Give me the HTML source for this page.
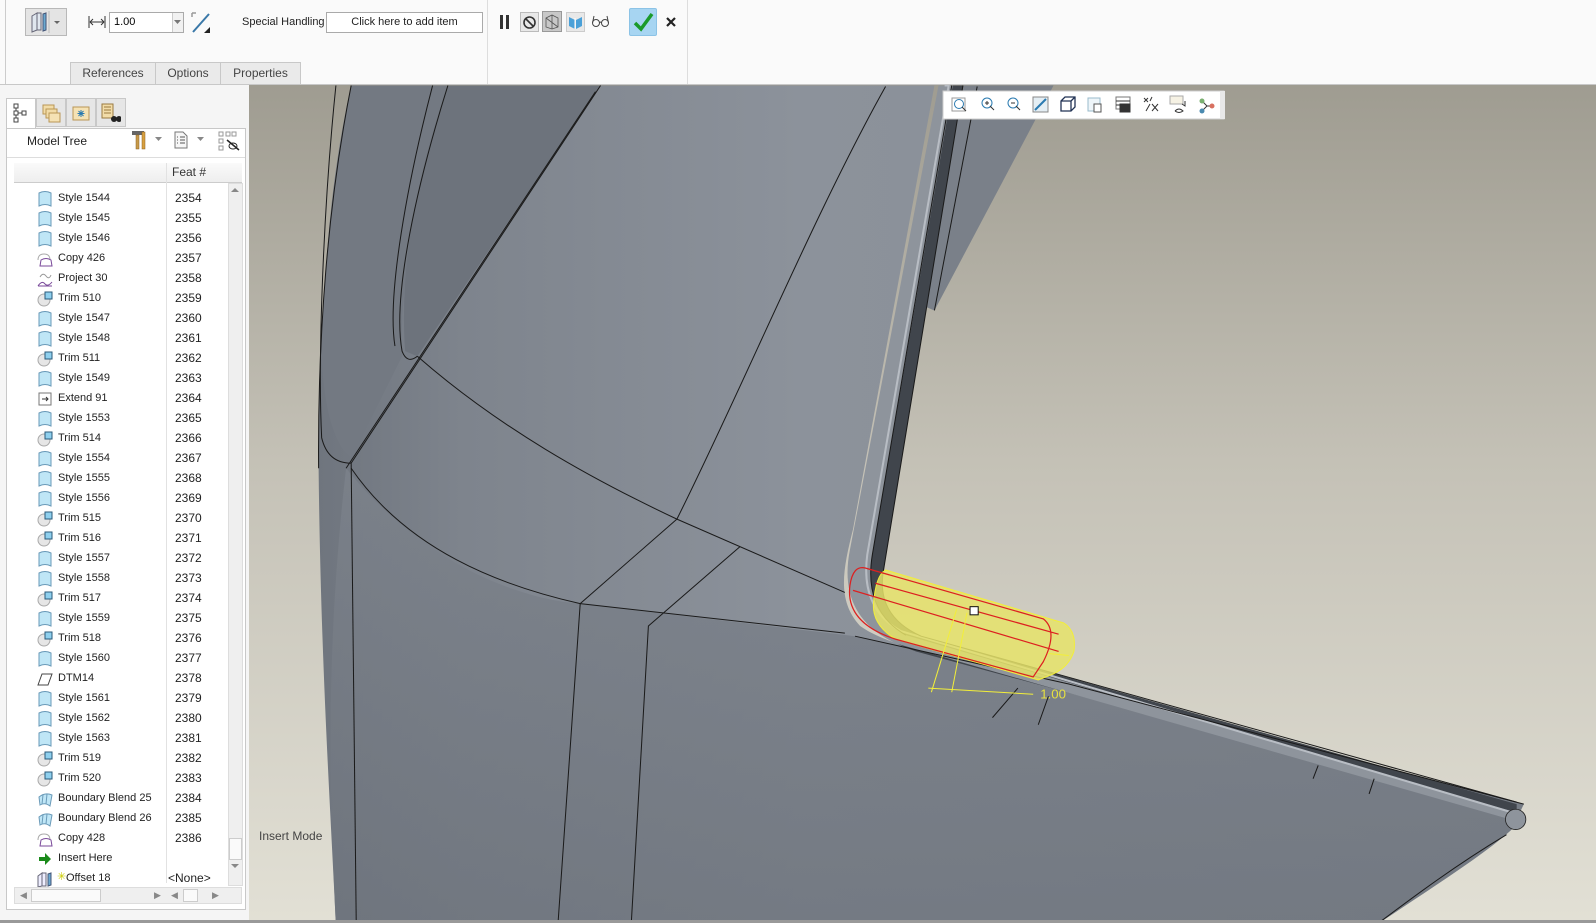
<!DOCTYPE html>
<html><head><meta charset="utf-8">
<style>
*{margin:0;padding:0;box-sizing:border-box}
body{width:1596px;height:923px;overflow:hidden;background:#f3f3f3;font-family:"Liberation Sans",sans-serif;position:relative}
.a{position:absolute}
#top{left:0;top:0;width:1596px;height:85px;background:#fafafa;border-bottom:1px solid #c8c8c8}
.t11{font-size:11px;color:#222}
.tab{position:absolute;top:62px;height:22px;border:1px solid #c8c8c8;border-bottom:none;background:#eaeaea;font-size:12px;color:#444;text-align:center;line-height:21px}
.row{position:absolute;left:0;width:230px;height:20px;font-size:11px;color:#222}
.row .ic{position:absolute;left:37px;top:2px;width:16px;height:16px}
.row .nm{position:absolute;left:58px;top:3px}
.row .fn{position:absolute;left:175px;top:2px;font-size:12px}
</style></head><body>
<div id="top" class="a">
  <div class="a" style="left:5px;top:0;width:1px;height:84px;background:#ccc"></div>
  <!-- offset button -->
  <div class="a" style="left:25px;top:8px;width:42px;height:28px;background:#e4e4e4;border:1px solid #b8b8b8"></div>
  <svg class="a" style="left:29px;top:11px" width="36" height="22"><path d="M3 5 L8 2 L8 19 L3 21 Z M8 2 L12 2 L12 19 L8 19" fill="#dfe6ee" stroke="#667" stroke-width="1"/><path d="M14 3 L17 2 L17 19 L14 20 Z" fill="#6aa9d0" stroke="#457"/><line x1="20" y1="0" x2="20" y2="22" stroke="#bbb"/><path d="M25 10 L31 10 L28 13 Z" fill="#666"/></svg>
  <svg class="a" style="left:88px;top:15px" width="18" height="14"><path d="M1 1 V13 M17 1 V13 M2 7 H16 M2 7 L5 4 M2 7 L5 10 M16 7 L13 4 M16 7 L13 10" stroke="#333" fill="none"/></svg>
  <div class="a" style="left:109px;top:12px;width:75px;height:21px;background:#fff;border:1px solid #aaa;font-size:11px;padding:3px 0 0 4px">1.00</div>
  <div class="a" style="left:172px;top:13px;width:11px;height:19px;background:#f1f1f1;border-left:1px solid #ccc"></div>
  <svg class="a" style="left:173px;top:19px" width="9" height="6"><path d="M1 1 L8 1 L4.5 5 Z" fill="#777"/></svg>
  <svg class="a" style="left:190px;top:11px" width="22" height="24"><path d="M3 21 L19 3" stroke="#3a78a8" stroke-width="2"/><path d="M2 2 L6 2 M2 2 L2 6" stroke="#999" stroke-width="1.5"/><path d="M20 22 L14 22 L20 16 Z" fill="#222"/></svg>
  <div class="a t11" style="left:242px;top:16px">Special Handling</div>
  <div class="a" style="left:326px;top:12px;width:157px;height:21px;background:#fff;border:1px solid #aaa;font-size:11px;color:#222;text-align:center;line-height:19px">Click here to add item</div>
  <div class="a" style="left:487px;top:0;width:1px;height:84px;background:#ddd"></div>
  <div class="a" style="left:500px;top:15px;width:3px;height:14px;background:#333"></div>
  <div class="a" style="left:506px;top:15px;width:3px;height:14px;background:#333"></div>
  <div class="a" style="left:520px;top:12px;width:19px;height:20px;background:#e8e8e8;border:1px solid #bbb"></div>
  <svg class="a" style="left:522px;top:15px" width="15" height="15"><circle cx="7.5" cy="7.5" r="5.5" stroke="#333" stroke-width="1.6" fill="none"/><path d="M4 4 L11 11" stroke="#333" stroke-width="1.6"/></svg>
  <div class="a" style="left:542px;top:11px;width:20px;height:21px;background:#c8c8c8;border:1px solid #999"></div>
  <svg class="a" style="left:544px;top:13px" width="16" height="17"><path d="M2 5 L8 2 L14 5 L14 14 L8 16 L2 14 Z M8 2 V16 M2 5 L14 14" stroke="#555" fill="none" stroke-width="0.8"/></svg>
  <div class="a" style="left:566px;top:12px;width:19px;height:20px;background:#e8e8e8;border:1px solid #ccc"></div>
  <svg class="a" style="left:567px;top:14px" width="17" height="16"><path d="M2 3 L8 6 L8 15 L2 12 Z" fill="#4aa0d8"/><path d="M9 6 L15 3 L15 12 L9 15 Z" fill="#4aa0d8"/><path d="M8 4 L8 15" stroke="#fff"/></svg>
  <svg class="a" style="left:591px;top:14px" width="20" height="14"><circle cx="5" cy="9" r="3.5" stroke="#444" fill="none"/><circle cx="14" cy="9" r="3.5" stroke="#444" fill="none"/><path d="M8.5 9 Q9.5 7 10.5 9 M1.5 9 L3 2 M17.5 9 L16 2" stroke="#444" fill="none"/></svg>
  <div class="a" style="left:629px;top:8px;width:28px;height:28px;background:#a7d5f2;border:1px solid #8cc3e6;border-radius:2px"></div>
  <svg class="a" style="left:632px;top:11px" width="22" height="22"><path d="M3 12 L9 18 L20 3" stroke="#1a9a2a" stroke-width="3.5" fill="none"/></svg>
  <svg class="a" style="left:665px;top:16px" width="12" height="12"><path d="M2 2 L10 10 M10 2 L2 10" stroke="#222" stroke-width="2.2"/></svg>
  <div class="a" style="left:687px;top:0;width:1px;height:84px;background:#ddd"></div>
  <div class="tab" style="left:70px;width:86px">References</div>
  <div class="tab" style="left:155px;width:66px">Options</div>
  <div class="tab" style="left:220px;width:81px">Properties</div>
</div>

<!-- left panel -->
<div class="a" style="left:0;top:85px;width:249px;height:838px;background:#f5f5f5"></div>
<div class="a" style="left:6px;top:98px;width:30px;height:31px;background:#fff;border:1px solid #c8c8c8;border-bottom:none"></div>
<div class="a" style="left:36px;top:98px;width:30px;height:29px;background:#e6e6e6;border:1px solid #c8c8c8"></div>
<div class="a" style="left:66px;top:98px;width:30px;height:29px;background:#e6e6e6;border:1px solid #c8c8c8"></div>
<div class="a" style="left:96px;top:98px;width:30px;height:29px;background:#e6e6e6;border:1px solid #c8c8c8"></div>
<svg class="a" style="left:13px;top:103px" width="16" height="20"><path d="M1 1h4v4h-4z M1 8h4v4h-4z M1 15h4v4h-4z M9 8h4v4h-4z M3 5v3 M5 10h4 M3 12v3" stroke="#444" fill="#fff" stroke-width="1"/></svg>
<svg class="a" style="left:42px;top:103px" width="20" height="20"><rect x="1" y="2" width="11" height="9" fill="#f2dca8" stroke="#b99756"/><rect x="4" y="6" width="11" height="9" fill="#f2dca8" stroke="#b99756"/><rect x="7" y="10" width="11" height="9" fill="#f5e2b4" stroke="#b99756"/></svg>
<svg class="a" style="left:72px;top:104px" width="18" height="17"><rect x="1" y="3" width="16" height="13" fill="#f5e2b4" stroke="#b99756"/><path d="M9 6v7 M5.5 9.5h7 M6.5 7l5 5 M11.5 7l-5 5" stroke="#2a7ab0"/></svg>
<svg class="a" style="left:101px;top:103px" width="20" height="20"><rect x="1" y="1" width="11" height="14" fill="#f2dca8" stroke="#9a7a40"/><path d="M3 4h7 M3 7h7 M3 10h7" stroke="#9a7a40"/><circle cx="13" cy="16" r="3" fill="#222"/><circle cx="18" cy="16" r="3" fill="#222"/></svg>
<div class="a" style="left:6px;top:128px;width:240px;height:782px;background:#fff;border:1px solid #c8c8c8"></div>
<div class="a" style="left:27px;top:134px;font-size:12px;color:#222">Model Tree</div>
<svg class="a" style="left:131px;top:129px" width="18" height="22"><rect x="1" y="2" width="12" height="4" fill="#666"/><rect x="5" y="6" width="3" height="14" fill="#c89a4a" stroke="#8a6020" stroke-width=".5"/><rect x="11" y="3" width="3" height="17" fill="#d8a040" stroke="#8a6020" stroke-width=".5"/></svg>
<svg class="a" style="left:154px;top:136px" width="9" height="6"><path d="M1 1 L8 1 L4.5 5 Z" fill="#888"/></svg>
<svg class="a" style="left:174px;top:131px" width="14" height="18"><path d="M1 1h8l4 4v12h-12z" fill="#f6f6f6" stroke="#777"/><path d="M3 6h1 M3 9h1 M3 12h1 M6 6h5 M6 9h5 M6 12h5" stroke="#555"/></svg>
<svg class="a" style="left:196px;top:136px" width="9" height="6"><path d="M1 1 L8 1 L4.5 5 Z" fill="#888"/></svg>
<svg class="a" style="left:218px;top:131px" width="22" height="20"><path d="M1 1h4v4h-4z M1 8h4v4h-4z M1 15h4v4h-4z M8 1h4v4h-4z M14 1h4v4h-4z" stroke="#999" fill="#fff"/><ellipse cx="15" cy="15" rx="4" ry="3" fill="#fff" stroke="#222"/><path d="M9 9 L21 19" stroke="#222" stroke-width="1.5"/></svg>
<div class="a" style="left:7px;top:157px;width:238px;height:1px;background:#ddd"></div>
<div class="a" style="left:14px;top:163px;width:228px;height:20px;background:linear-gradient(#fafafa,#eee);border-bottom:1px solid #ccc"></div>
<div class="a" style="left:166px;top:163px;width:1px;height:720px;background:#e2e2e2"></div>
<div class="a" style="left:172px;top:165px;font-size:12px;color:#333">Feat #</div>
<div class="a" style="left:228px;top:183px;width:15px;height:703px;background:#efefef;border:1px solid #ddd"></div>
<svg class="a" style="left:230px;top:186px" width="10" height="8"><path d="M1 6 L9 6 L5 2 Z" fill="#888"/></svg>
<div class="a" style="left:229px;top:838px;width:13px;height:22px;background:#fafafa;border:1px solid #ccc"></div>
<svg class="a" style="left:230px;top:862px" width="10" height="8"><path d="M1 2 L9 2 L5 6 Z" fill="#888"/></svg>
<div class="a" style="left:14px;top:887px;width:228px;height:17px;background:#efefef;border:1px solid #ddd"></div>
<div class="a" style="left:31px;top:889px;width:70px;height:13px;background:#fafafa;border:1px solid #ccc"></div>
<div class="a" style="left:183px;top:889px;width:15px;height:13px;background:#fafafa;border:1px solid #ccc"></div>
<div class="a" style="left:20px;top:890px;font-size:9px;color:#888">◀</div>
<div class="a" style="left:154px;top:890px;font-size:9px;color:#888">▶</div>
<div class="a" style="left:171px;top:890px;font-size:9px;color:#888">◀</div>
<div class="a" style="left:212px;top:890px;font-size:9px;color:#888">▶</div>

<div id="tree" class="a" style="left:0;top:0">
<svg width="0" height="0" style="position:absolute"><defs>
<g id="sty"><path d="M2 2 Q8 -1 14 2 L14 15 Q8 12 2 15 Z" fill="#bfe6f6" stroke="#6a9ab8"/></g>
<g id="trm"><circle cx="7" cy="9" r="6" fill="#e6e6e6" stroke="#aaa"/><rect x="8" y="1" width="7" height="7" fill="#8fd0ee" stroke="#2a5a7a"/></g>
<g id="cpy"><path d="M1 9 Q1 3 7 3 Q13 3 13 9" fill="none" stroke="#aaa"/><path d="M3 15 L4 9 Q9 6 14 9 L15 15 Z" fill="#fff" stroke="#7a4a9a"/></g>
<g id="prj"><path d="M3 6 Q6 1 9 5 Q12 9 14 4" fill="none" stroke="#999"/><path d="M1 15 Q5 9 8 13 Q11 16 15 11 M1 15 H15" fill="none" stroke="#7a4a9a"/></g>
<g id="ext"><rect x="2" y="2" width="12" height="12" fill="#fff" stroke="#777"/><path d="M5 8 H11 M9 6 L11 8 L9 10" stroke="#333" fill="none"/></g>
<g id="bb"><path d="M2 6 Q8 1 15 4 L13 15 Q8 11 3 14 Z" fill="#bfe6f6" stroke="#6a9ab8"/><path d="M6 4 L5 13 M10 3 L9 13" stroke="#6a9ab8"/></g>
<g id="dtm"><path d="M1 14 L5 3 L15 3 L11 14 Z" fill="#fff" stroke="#444"/></g>
</defs></svg>
</div>
<div class="a" style="left:0;top:173px;width:228px;height:10px;overflow:hidden"></div>
<div class="a" style="left:37px;top:183px;width:20px;height:3px;overflow:hidden"><svg width="16" height="16" style="margin-top:-13px"><path d="M3 15 L4 9 Q9 6 14 9 L15 15 Z" fill="#fff" stroke="#7a4a9a"/></svg></div>

<div id="rows">
<div class="row" style="top:189px"><svg class="ic"><use href="#sty"/></svg><span class="nm">Style 1544</span><span class="fn">2354</span></div>
<div class="row" style="top:209px"><svg class="ic"><use href="#sty"/></svg><span class="nm">Style 1545</span><span class="fn">2355</span></div>
<div class="row" style="top:229px"><svg class="ic"><use href="#sty"/></svg><span class="nm">Style 1546</span><span class="fn">2356</span></div>
<div class="row" style="top:249px"><svg class="ic"><use href="#cpy"/></svg><span class="nm">Copy 426</span><span class="fn">2357</span></div>
<div class="row" style="top:269px"><svg class="ic"><use href="#prj"/></svg><span class="nm">Project 30</span><span class="fn">2358</span></div>
<div class="row" style="top:289px"><svg class="ic"><use href="#trm"/></svg><span class="nm">Trim 510</span><span class="fn">2359</span></div>
<div class="row" style="top:309px"><svg class="ic"><use href="#sty"/></svg><span class="nm">Style 1547</span><span class="fn">2360</span></div>
<div class="row" style="top:329px"><svg class="ic"><use href="#sty"/></svg><span class="nm">Style 1548</span><span class="fn">2361</span></div>
<div class="row" style="top:349px"><svg class="ic"><use href="#trm"/></svg><span class="nm">Trim 511</span><span class="fn">2362</span></div>
<div class="row" style="top:369px"><svg class="ic"><use href="#sty"/></svg><span class="nm">Style 1549</span><span class="fn">2363</span></div>
<div class="row" style="top:389px"><svg class="ic"><use href="#ext"/></svg><span class="nm">Extend 91</span><span class="fn">2364</span></div>
<div class="row" style="top:409px"><svg class="ic"><use href="#sty"/></svg><span class="nm">Style 1553</span><span class="fn">2365</span></div>
<div class="row" style="top:429px"><svg class="ic"><use href="#trm"/></svg><span class="nm">Trim 514</span><span class="fn">2366</span></div>
<div class="row" style="top:449px"><svg class="ic"><use href="#sty"/></svg><span class="nm">Style 1554</span><span class="fn">2367</span></div>
<div class="row" style="top:469px"><svg class="ic"><use href="#sty"/></svg><span class="nm">Style 1555</span><span class="fn">2368</span></div>
<div class="row" style="top:489px"><svg class="ic"><use href="#sty"/></svg><span class="nm">Style 1556</span><span class="fn">2369</span></div>
<div class="row" style="top:509px"><svg class="ic"><use href="#trm"/></svg><span class="nm">Trim 515</span><span class="fn">2370</span></div>
<div class="row" style="top:529px"><svg class="ic"><use href="#trm"/></svg><span class="nm">Trim 516</span><span class="fn">2371</span></div>
<div class="row" style="top:549px"><svg class="ic"><use href="#sty"/></svg><span class="nm">Style 1557</span><span class="fn">2372</span></div>
<div class="row" style="top:569px"><svg class="ic"><use href="#sty"/></svg><span class="nm">Style 1558</span><span class="fn">2373</span></div>
<div class="row" style="top:589px"><svg class="ic"><use href="#trm"/></svg><span class="nm">Trim 517</span><span class="fn">2374</span></div>
<div class="row" style="top:609px"><svg class="ic"><use href="#sty"/></svg><span class="nm">Style 1559</span><span class="fn">2375</span></div>
<div class="row" style="top:629px"><svg class="ic"><use href="#trm"/></svg><span class="nm">Trim 518</span><span class="fn">2376</span></div>
<div class="row" style="top:649px"><svg class="ic"><use href="#sty"/></svg><span class="nm">Style 1560</span><span class="fn">2377</span></div>
<div class="row" style="top:669px"><svg class="ic"><use href="#dtm"/></svg><span class="nm">DTM14</span><span class="fn">2378</span></div>
<div class="row" style="top:689px"><svg class="ic"><use href="#sty"/></svg><span class="nm">Style 1561</span><span class="fn">2379</span></div>
<div class="row" style="top:709px"><svg class="ic"><use href="#sty"/></svg><span class="nm">Style 1562</span><span class="fn">2380</span></div>
<div class="row" style="top:729px"><svg class="ic"><use href="#sty"/></svg><span class="nm">Style 1563</span><span class="fn">2381</span></div>
<div class="row" style="top:749px"><svg class="ic"><use href="#trm"/></svg><span class="nm">Trim 519</span><span class="fn">2382</span></div>
<div class="row" style="top:769px"><svg class="ic"><use href="#trm"/></svg><span class="nm">Trim 520</span><span class="fn">2383</span></div>
<div class="row" style="top:789px"><svg class="ic"><use href="#bb"/></svg><span class="nm">Boundary Blend 25</span><span class="fn">2384</span></div>
<div class="row" style="top:809px"><svg class="ic"><use href="#bb"/></svg><span class="nm">Boundary Blend 26</span><span class="fn">2385</span></div>
<div class="row" style="top:829px"><svg class="ic"><use href="#cpy"/></svg><span class="nm">Copy 428</span><span class="fn">2386</span></div>
<div class="row" style="top:849px"><svg class="ic"><path d="M2 6 H8 V2 L14 8 L8 14 V10 H2 Z" fill="#1a8a1a"/></svg><span class="nm">Insert Here</span></div>
<div class="row" style="top:869px"><svg class="ic"><path d="M1 5 L5 2 L5 15 L1 16 Z M5 2 L9 2 L9 15 L5 15" fill="#eef" stroke="#667"/><path d="M11 3 L14 2 L14 14 L11 15 Z" fill="#6aa9d0" stroke="#457"/></svg><span class="a" style="left:57px;top:1px;font-size:11px;color:#cc0">✳</span><span class="nm" style="left:66px">Offset 18</span><span class="fn" style="left:168px">&lt;None&gt;</span></div>
</div>

<!-- viewport -->
<svg class="a" style="left:0;top:0" width="1596" height="923">
<defs>
<linearGradient id="bg" x1="0" y1="0" x2="0" y2="1"><stop offset="0" stop-color="#9f9c91"/><stop offset=".45" stop-color="#c4c1b6"/><stop offset="1" stop-color="#e2e0d5"/></linearGradient>
<linearGradient id="sf" x1="0" y1="0" x2="1" y2="0"><stop offset="0" stop-color="#6f757e"/><stop offset=".12" stop-color="#7e848d"/><stop offset=".4" stop-color="#8c929b"/><stop offset="1" stop-color="#868c95"/></linearGradient>
<linearGradient id="lo" x1="0" y1="0" x2="0" y2="1"><stop offset="0" stop-color="#7c828b"/><stop offset="1" stop-color="#6e747d"/></linearGradient>
<clipPath id="vc"><rect x="249" y="85" width="1347" height="836"/></clipPath>
</defs>
<g clip-path="url(#vc)">
<rect x="249" y="85" width="1347" height="836" fill="url(#bg)"/>
<g transform="scale(1.0179)">
 <!-- upper right slab -->
 <path d="M945 84 L1035 84 L918 305 L906 300 Z" fill="#7a8089"/>
 <!-- main surface -->
 <path d="M345 84 C322 200 312 330 313 460 C315 650 325 800 330 910 L1350 910 C1410 870 1460 838 1485 815 L1497 790 L1050 672 C960 650 880 640 845 615 C822 590 828 560 838 520 L918 84 Z" fill="url(#sf)"/>
 <!-- lower band -->
 <path d="M340 460 C420 560 520 590 570 593 L840 625 L1050 672 L1497 790 L1485 815 C1460 838 1410 870 1350 910 L330 910 C325 800 318 650 340 460 Z" fill="url(#lo)" opacity=".8"/>
 <!-- left dark rim region -->
 <path d="M345 84 L440 84 C410 180 392 280 395 350 L345 450 C318 430 312 350 318 300 C322 220 330 150 345 84Z" fill="#737982"/>
 <path d="M440 84 L590 84 L410 350 L398 345 C392 260 410 170 440 84Z" fill="#6d737c"/>
 <!-- flange dark band -->
 <path d="M930 84 L946 84 L868 560 Q860 605 905 625 L1490 790 L1490 800 L900 640 Q835 618 842 560 Z" fill="#40454c"/>
 <path d="M922 84 L936 84 L857 545 Q848 600 890 624 L1485 797 L1487 806 L880 632 Q822 605 835 540 Z" fill="#8e949c"/>
 <path d="M928 84 L932 84 L852 545 Q845 598 885 620 L1485 798" fill="none" stroke="#b8bdc4" stroke-width="2"/>
 <circle cx="1489" cy="805" r="10" fill="#8e949c" stroke="#222" stroke-width=".8"/>
 <g fill="none" stroke="#1a1a1a" stroke-width="1">
  <path d="M345 84 C322 200 312 330 313 460"/>
  <path d="M440 84 C410 180 385 290 395 345 Q400 358 410 350"/>
  <path d="M425 84 C400 180 380 290 388 340"/>
  <path d="M330 84 C318 200 312 350 316 430 Q322 455 345 455"/>
  <path d="M590 84 L345 455"/>
  <path d="M585 90 L340 460"/>
  <path d="M345 455 L350 910"/>
  <path d="M410 350 C490 420 580 470 665 510 L830 582"/>
  <path d="M345 460 C400 540 490 575 570 593 L830 622"/>
  <path d="M870 85 C800 210 730 380 665 510"/>
  <path d="M665 510 L570 593 L548 910"/>
  <path d="M727 537 L637 615 L620 910"/>
  <path d="M840 625 L1050 672 L1497 790"/>
  <path d="M960 85 L918 305"/>
  <path d="M935 84 L857 545 Q848 600 890 624"/>
  <path d="M946 84 L868 560 Q860 605 905 625 L1490 788"/>
  <path d="M1000 676 L975 705 M1030 684 L1020 712"/>
  <path d="M1295 752 L1290 765 M1350 765 L1345 780"/>
  <path d="M1480 820 C1430 850 1390 880 1350 910"/>
 </g>
 <!-- yellow feature -->
 <path d="M870 560 L1045 612 Q1058 620 1055 640 Q1050 655 1035 662 L1020 668 L880 628 Q858 615 858 595 Q860 565 870 560 Z" fill="#e6e36a" fill-opacity=".85" stroke="#f2ee3a"/>
 <path d="M850 558 L1025 608 Q1040 620 1025 650 L1015 665 L880 628 Q830 612 835 575 Q838 555 850 558 Z M838 580 L1040 640 M860 573 L1040 623" fill="none" stroke="#dd2020" stroke-width="1.2"/>
 <path d="M940 598 L915 680 M950 602 L935 680 M912 676 L1015 682 M1030 642 L1050 644" stroke="#f2ee3a" fill="none"/>
 <rect x="953" y="596" width="8" height="8" fill="#fff" stroke="#111"/>
 <text x="1022" y="686" font-family="Liberation Sans" font-size="13" fill="#e6e040">1.00</text>
</g>
<text x="259" y="840" font-family="Liberation Sans" font-size="12" fill="#444">Insert Mode</text>
<!-- view toolbar -->
<rect x="943" y="91" width="281" height="28" fill="#fff" stroke="#ccc"/>
<rect x="1220" y="91" width="5" height="28" fill="#e8e8e8"/>
<g fill="none" stroke="#333">
 <rect x="952" y="98" width="13" height="13" stroke="#999"/><circle cx="959" cy="104" r="4.5" stroke="#2a7ab0"/><path d="M962 107 L966 111"/>
 <circle cx="987" cy="103" r="5" stroke="#2a7ab0"/><path d="M985 103h4 M987 101v4 M990 106 L994 110"/>
 <circle cx="1013" cy="103" r="5" stroke="#2a7ab0"/><path d="M1011 103h4 M1016 106 L1020 110"/>
 <rect x="1033" y="97" width="15" height="15" fill="#e4eef4" stroke="#888"/><path d="M1035 110 L1046 99" stroke="#2a7ab0" stroke-width="2"/>
 <path d="M1061 101 L1065 97 L1075 97 L1075 107 L1071 111 L1061 111 Z M1061 101 L1071 101 L1071 111 M1071 101 L1075 97" stroke="#235" stroke-width="1.3"/>
 <rect x="1088" y="98" width="12" height="13" stroke="#9bc" fill="#eef5f9"/><rect x="1094" y="104" width="7" height="8" fill="#fff" stroke="#555"/>
 <rect x="1116" y="97" width="14" height="12" stroke="#777"/><path d="M1116 101h14 M1116 105h14"/><rect x="1120" y="104" width="10" height="8" fill="#333"/>
 <path d="M1144 98 L1148 102 M1148 98 L1144 102 M1152 97 L1150 101 M1146 111 L1150 104 M1152 104 L1158 111 M1158 104 L1152 111" stroke="#333"/>
 <rect x="1170" y="96" width="13" height="8" stroke="#aaa" fill="#f6f2e4"/><path d="M1185 101 v5 l-3 -2 M1175 111 q4 -4 8 0 q-4 3 -8 0" stroke="#333"/>
 <path d="M1202 101 L1207 106 L1202 111 M1207 106 L1212 106" stroke="#333"/>
</g>
<circle cx="1202" cy="101" r="2.5" fill="#7ab070"/><circle cx="1202" cy="111" r="2.5" fill="#4a8ab0"/><circle cx="1212" cy="106" r="2.5" fill="#d87060"/>
</g>
<rect x="0" y="920" width="1596" height="3" fill="#999"/>
</svg>
</body></html>
